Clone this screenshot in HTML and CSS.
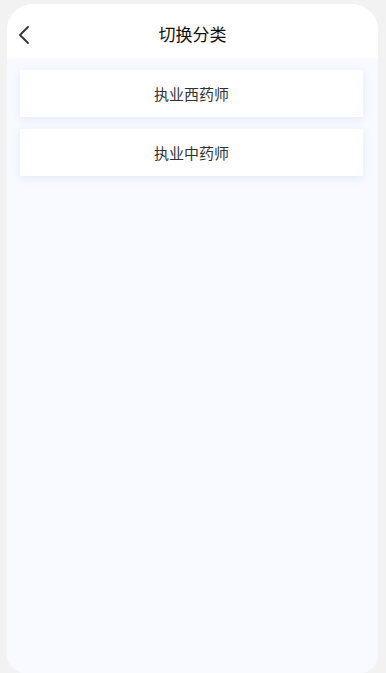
FILE: index.html
```html
<!DOCTYPE html>
<html>
<head>
	<meta charset="utf-8">
	<title>切换分类</title>
	<link rel="stylesheet" href="styles.css">
</head>
<body>
	<div class="phone">
		<div class="header">
			<span class="back">
				<svg width="14" height="20" viewBox="0 0 14 20"><path d="M11 2 L3 10 L11 18" fill="none" stroke="#333" stroke-width="1.8" stroke-linecap="round" stroke-linejoin="round"/></svg>
			</span>
			<h1>切换分类</h1>
		</div>
		<div class="content">
			<div class="item">执业西药师</div>
			<div class="item">执业中药师</div>
		</div>
	</div>
</body>
</html>
```

FILE: styles.css
```css
html, body {
	margin: 0;
	padding: 0;
	height: 100%;
}
body {
	font-family: "Noto Sans CJK SC", "Noto Sans", sans-serif;
	background-color: #f2f2f2;
	padding: 4px 8px 0 7px;
	box-sizing: border-box;
}
.phone {
	height: 100%;
	background-color: #f8faff;
	border-radius: 26px 26px 18px 18px;
	overflow: hidden;
	display: flex;
	flex-direction: column;
}
.header {
	height: 54px;
	background-color: #fff;
	display: flex;
	align-items: center;
	justify-content: center;
	position: relative;
}
.back {
	position: absolute;
	left: 10px;
	top: 21px;
	line-height: 0;
}
.header h1 {
	margin: 0;
	font-size: 17px;
	font-weight: 400;
	color: #111;
	margin-top: 4px;
}
.content {
	padding: 12px 15px 0 13px;
	display: flex;
	flex-direction: column;
	gap: 12px;
}
.item {
	height: 47px;
	background-color: #fff;
	display: flex;
	align-items: center;
	justify-content: center;
	font-size: 15px;
	color: #333;
	box-shadow: 0 2px 8px rgba(200, 215, 240, 0.45);
}
```
